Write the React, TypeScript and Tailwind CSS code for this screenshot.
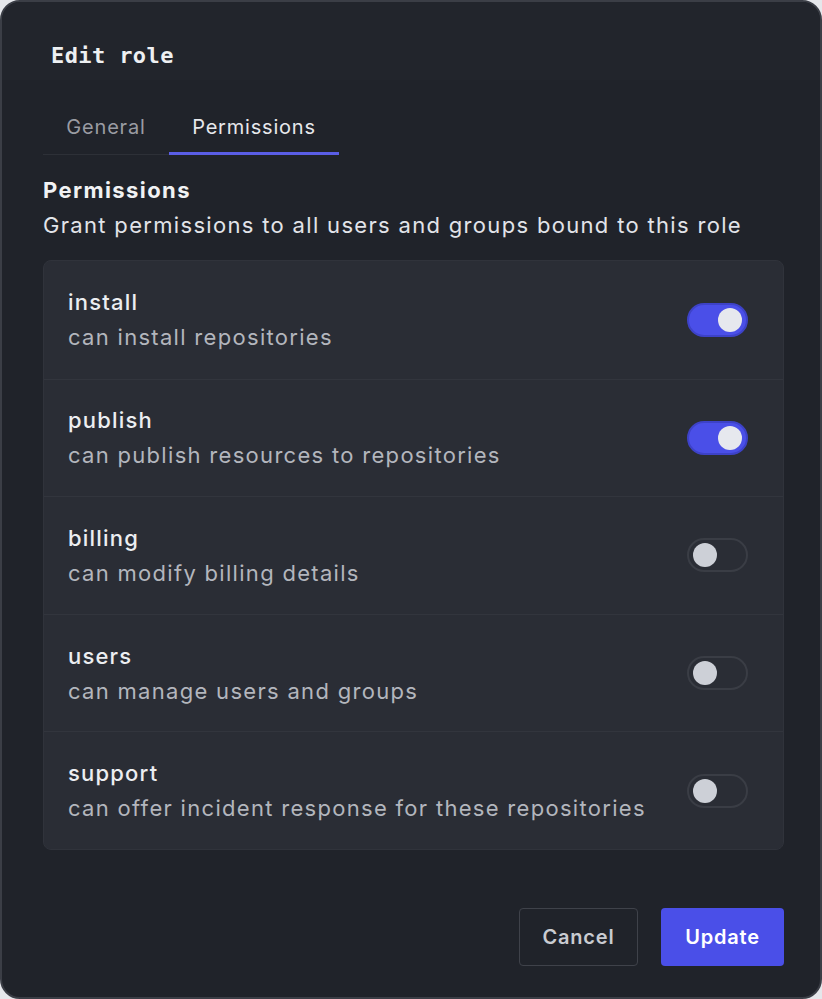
import { useState } from 'react';

const permissions = [
  { key: 'install', label: 'install', description: 'can install repositories', enabled: true },
  { key: 'publish', label: 'publish', description: 'can publish resources to repositories', enabled: true },
  { key: 'billing', label: 'billing', description: 'can modify billing details', enabled: false },
  { key: 'users', label: 'users', description: 'can manage users and groups', enabled: false },
  { key: 'support', label: 'support', description: 'can offer incident response for these repositories', enabled: false },
];

function Toggle({ on, onChange }: { on: boolean; onChange: () => void }) {
  return (
    <button
      onClick={onChange}
      className={`w-[61px] h-[34px] rounded-full border-2 flex items-center px-[4px] shrink-0 ${
        on ? 'bg-[#4a4fe8] border-[#3d42c8] justify-end' : 'bg-transparent border-[#3a3d45] justify-start'
      }`}
    >
      <span className={`w-[24px] h-[24px] rounded-full ${on ? 'bg-[#e6e8ee]' : 'bg-[#cdd0d7]'}`} />
    </button>
  );
}

export default function App() {
  const [state, setState] = useState(permissions.map((p) => p.enabled));

  return (
    <div className="w-[822px] h-[999px] bg-[#e5e7eb] font-['Inter',sans-serif]">
      <div className="w-[822px] h-[999px] bg-[#20232a] border-2 border-[#3b3e46] rounded-[20px] overflow-hidden flex flex-col">
        {/* Header */}
        <div className="h-[78px] bg-[#22252c] flex items-start px-[49px] pt-[38px]">
          <h1 className="text-[22px] leading-[32px] font-bold text-[#eef0f2] font-['DejaVu_Sans_Mono',monospace] tracking-[0.4px]">
            Edit role
          </h1>
        </div>

        <div className="pl-[41px] pr-[36px] flex flex-col flex-1">
          {/* Tabs */}
          <div className="flex h-[75px] items-end">
            <div className="w-[126px] h-[62px] border-b border-[#2d3037] flex items-start justify-center pt-[20px] text-[20px] leading-[28px] text-[#9a9ca3] tracking-[0.8px]">
              General
            </div>
            <div className="w-[170px] h-[62px] border-b-[3px] border-[#5a5ee6] flex items-start justify-center pt-[20px] text-[20px] leading-[28px] text-[#e7e8ec] tracking-[0.8px]">
              Permissions
            </div>
          </div>

          {/* Section heading */}
          <div className="mt-[21px]">
            <h2 className="text-[22px] leading-[28px] font-bold text-[#f1f2f4] tracking-[1.4px]">Permissions</h2>
            <p className="mt-[7px] text-[22px] leading-[28px] text-[#e2e4e9] tracking-[1.32px]">
              Grant permissions to all users and groups bound to this role
            </p>
          </div>

          {/* Permission list */}
          <div className="mt-[21px] bg-[#2a2d35] border border-[#30333b] rounded-[8px] flex flex-col">
            {permissions.map((p, i) => (
              <div
                key={p.key}
                className={`h-[117.6px] flex items-center justify-between pl-[24px] pr-[35px] ${
                  i > 0 ? 'border-t border-[#32353d]' : ''
                }`}
              >
                <div className="flex flex-col">
                  <span className="text-[22px] leading-[28px] font-medium text-[#eceef1] tracking-[1.2px]">{p.label}</span>
                  <span className="mt-[7px] text-[22px] leading-[28px] text-[#b3b6bd] tracking-[1.3px]">{p.description}</span>
                </div>
                <Toggle
                  on={state[i]}
                  onChange={() => setState((s) => s.map((v, j) => (j === i ? !v : v)))}
                />
              </div>
            ))}
          </div>

          {/* Actions */}
          <div className="mt-auto mb-[31px] flex justify-end gap-[23px]">
            <button className="w-[119px] h-[58px] rounded-[4px] border border-[#3f424a] text-[20px] font-semibold text-[#c9cbd1] tracking-[0.8px]">
              Cancel
            </button>
            <button className="w-[123px] h-[58px] rounded-[4px] bg-[#4a4fe8] text-[20px] font-semibold text-white tracking-[0.8px]">
              Update
            </button>
          </div>
        </div>
      </div>
    </div>
  );
}
